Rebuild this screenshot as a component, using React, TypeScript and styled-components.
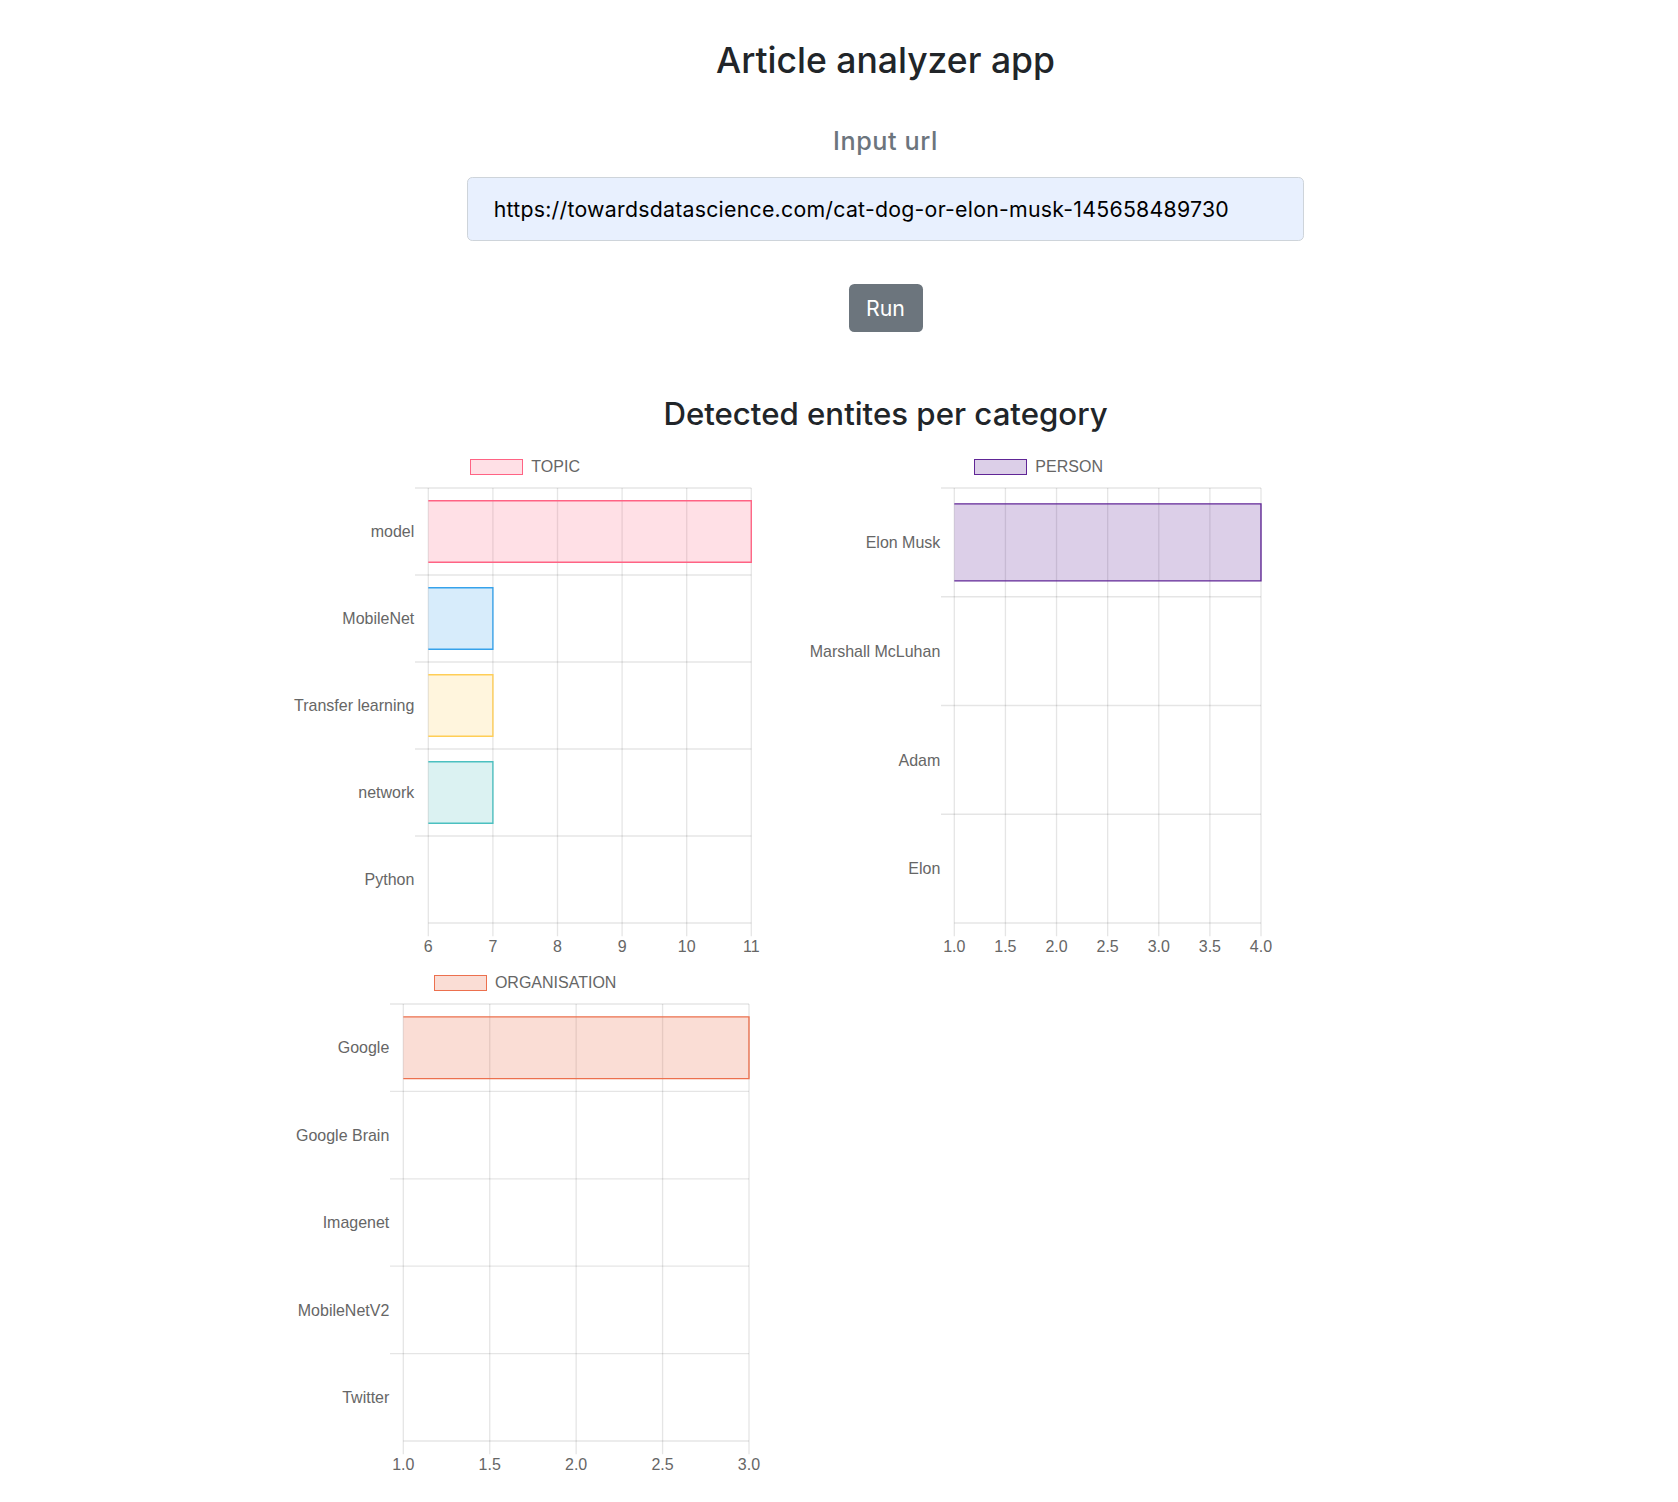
import React from "react";
import styled, { createGlobalStyle } from "styled-components";

const GlobalStyle = createGlobalStyle`
  html, body { margin: 0; padding: 0; background: #fff; }
  body {
    font-family: Inter, "Noto Sans", "Liberation Sans", sans-serif;
    color: #212529;
  }
  * { box-sizing: border-box; }
`;

const Page = styled.main`
  padding-top: 40px;
  padding-bottom: 20px;
`;

const Header = styled.header`
  width: 837px;
  margin-left: 467px;
  display: flex;
  flex-direction: column;
  align-items: center;
`;

const Title = styled.h1`
  margin: 0;
  font-size: 35.5px;
  line-height: 1.2;
  font-weight: 500;
  color: #212529;
`;

const Subtitle = styled.h2`
  margin: 43.4px 0 0;
  font-size: 25.2px;
  line-height: 1.2;
  font-weight: 500;
  letter-spacing: 0.6px;
  color: #6c757d;
`;

const UrlInput = styled.input`
  margin-top: 20.7px;
  width: 837px;
  height: 64px;
  padding: 0 25.7px;
  border: 1.33px solid #ced4da;
  border-radius: 5.3px;
  background: #e8f0fe;
  font-family: Inter, "Noto Sans", sans-serif;
  font-size: 21.3px;
  letter-spacing: 0.25px;
  color: #000;
  outline: none;
`;

const RunButton = styled.button`
  margin-top: 43.3px;
  width: 74px;
  height: 48px;
  border: none;
  border-radius: 5.3px;
  background: #6c757d;
  color: #fff;
  font-family: Inter, "Noto Sans", sans-serif;
  font-size: 21.3px;
  cursor: pointer;
`;

const SectionTitle = styled.h2`
  margin: 63.9px 0 0;
  font-size: 31.2px;
  line-height: 1.2;
  font-weight: 500;
  color: #212529;
`;

const ChartGrid = styled.section`
  margin-top: 12.3px;
  margin-left: 290px;
  display: grid;
  grid-template-columns: 470px 467px;
  column-gap: 45px;
  align-items: start;
`;

const ChartPanel = styled.figure<{ $width: number }>`
  margin: 0;
  width: ${(p) => p.$width}px;
  display: flex;
  flex-direction: column;
`;

const Legend = styled.div`
  height: 42.6px;
  padding-top: 13.3px;
  display: flex;
  justify-content: center;
  align-items: flex-start;
  gap: 8px;
`;

const LegendSwatch = styled.span<{ $fill: string; $stroke: string }>`
  display: block;
  flex: none;
  width: 53.3px;
  height: 16px;
  background: ${(p) => p.$fill};
  border: 1.33px solid ${(p) => p.$stroke};
`;

const LegendLabel = styled.span`
  flex: none;
  font-family: "Liberation Sans", Arial, sans-serif;
  font-size: 16px;
  line-height: 16px;
  color: #666;
`;

const PlotSvg = styled.svg`
  display: block;
  overflow: visible;
`;

const GridLine = styled.line`
  stroke: rgba(0, 0, 0, 0.1);
  stroke-width: 1.33;
`;

const TickLabel = styled.text`
  font-family: "Liberation Sans", Arial, sans-serif;
  font-size: 16px;
  fill: #666;
`;

type Bar = { label: string; value: number; fill: string; stroke: string };

type ChartProps = {
  width: number;
  plotLeft: number;
  plotRight: number;
  plotHeight: number;
  ticks: number[];
  decimals: number;
  legend: { label: string; fill: string; stroke: string };
  bars: Bar[];
};

const TICK = 13.3;

function BarChart({ width, plotLeft, plotRight, plotHeight, ticks, decimals, legend, bars }: ChartProps) {
  const min = ticks[0];
  const max = ticks[ticks.length - 1];
  const rowH = plotHeight / bars.length;
  const sx = (v: number) => plotLeft + ((v - min) / (max - min)) * (plotRight - plotLeft);
  const svgH = plotHeight + 38.4;
  return (
    <ChartPanel $width={width}>
      <Legend>
        <LegendSwatch $fill={legend.fill} $stroke={legend.stroke} />
        <LegendLabel>{legend.label}</LegendLabel>
      </Legend>
      <PlotSvg width={width} height={svgH} viewBox={`0 0 ${width} ${svgH}`}>
        {bars.map((_, i) => (
          <GridLine key={`h${i}`} x1={plotLeft - TICK} x2={plotRight} y1={i * rowH} y2={i * rowH} />
        ))}
        <GridLine x1={plotLeft} x2={plotRight} y1={plotHeight} y2={plotHeight} />
        {ticks.map((t) => (
          <GridLine key={`v${t}`} x1={sx(t)} x2={sx(t)} y1={0} y2={plotHeight + TICK} />
        ))}
        {bars.map((b, i) => {
          const x1 = sx(b.value);
          if (x1 - plotLeft < 0.5) return null;
          const h = rowH * 0.707;
          const y0 = i * rowH + (rowH - h) / 2;
          const y1 = y0 + h;
          return (
            <g key={`b${i}`}>
              <rect x={plotLeft} y={y0} width={x1 - plotLeft} height={h} fill={b.fill} />
              <path
                d={`M${plotLeft} ${y0} H${x1} V${y1} H${plotLeft}`}
                fill="none"
                stroke={b.stroke}
                strokeWidth={1.33}
              />
            </g>
          );
        })}
        {bars.map((b, i) => (
          <TickLabel key={`l${i}`} x={plotLeft - TICK - 0.7} y={(i + 0.5) * rowH + 5.7} textAnchor="end">
            {b.label}
          </TickLabel>
        ))}
        {ticks.map((t) => (
          <TickLabel key={`t${t}`} x={sx(t)} y={plotHeight + 29} textAnchor="middle">
            {t.toFixed(decimals)}
          </TickLabel>
        ))}
      </PlotSvg>
    </ChartPanel>
  );
}

const PINK = { fill: "rgba(255,99,132,0.2)", stroke: "rgb(255,99,132)" };
const BLUE = { fill: "rgba(54,162,235,0.2)", stroke: "rgb(54,162,235)" };
const YELLOW = { fill: "rgba(255,206,86,0.2)", stroke: "rgb(255,206,86)" };
const TEAL = { fill: "rgba(75,192,192,0.2)", stroke: "rgb(75,192,192)" };
const VIOLET = { fill: "rgba(153,102,255,0.2)", stroke: "rgb(153,102,255)" };
const PURPLE = { fill: "rgba(96,38,150,0.22)", stroke: "rgb(96,38,150)" };
const ORANGE = { fill: "rgba(236,112,78,0.24)", stroke: "rgb(236,112,78)" };

const topicBars: Bar[] = [
  { label: "model", value: 11, ...PINK },
  { label: "MobileNet", value: 7, ...BLUE },
  { label: "Transfer learning", value: 7, ...YELLOW },
  { label: "network", value: 7, ...TEAL },
  { label: "Python", value: 6, ...VIOLET },
];

const personBars: Bar[] = [
  { label: "Elon Musk", value: 4, ...PURPLE },
  { label: "Marshall McLuhan", value: 1, ...PURPLE },
  { label: "Adam", value: 1, ...PURPLE },
  { label: "Elon", value: 1, ...PURPLE },
];

const orgBars: Bar[] = [
  { label: "Google", value: 3, ...ORANGE },
  { label: "Google Brain", value: 1, ...ORANGE },
  { label: "Imagenet", value: 1, ...ORANGE },
  { label: "MobileNetV2", value: 1, ...ORANGE },
  { label: "Twitter", value: 1, ...ORANGE },
];

export default function App() {
  return (
    <Page>
      <GlobalStyle />
      <Header>
        <Title>Article analyzer app</Title>
        <Subtitle>Input url</Subtitle>
        <UrlInput
          type="text"
          readOnly
          value="https://towardsdatascience.com/cat-dog-or-elon-musk-145658489730"
        />
        <RunButton type="button">Run</RunButton>
        <SectionTitle>Detected entites per category</SectionTitle>
      </Header>
      <ChartGrid>
        <BarChart
          width={470}
          plotLeft={138.3}
          plotRight={461.3}
          plotHeight={435}
          ticks={[6, 7, 8, 9, 10, 11]}
          decimals={0}
          legend={{ label: "TOPIC", ...PINK }}
          bars={topicBars}
        />
        <BarChart
          width={467}
          plotLeft={149.3}
          plotRight={456}
          plotHeight={435}
          ticks={[1, 1.5, 2, 2.5, 3, 3.5, 4]}
          decimals={1}
          legend={{ label: "PERSON", ...PURPLE }}
          bars={personBars}
        />
        <BarChart
          width={470}
          plotLeft={113.3}
          plotRight={459}
          plotHeight={437}
          ticks={[1, 1.5, 2, 2.5, 3]}
          decimals={1}
          legend={{ label: "ORGANISATION", ...ORANGE }}
          bars={orgBars}
        />
      </ChartGrid>
    </Page>
  );
}
